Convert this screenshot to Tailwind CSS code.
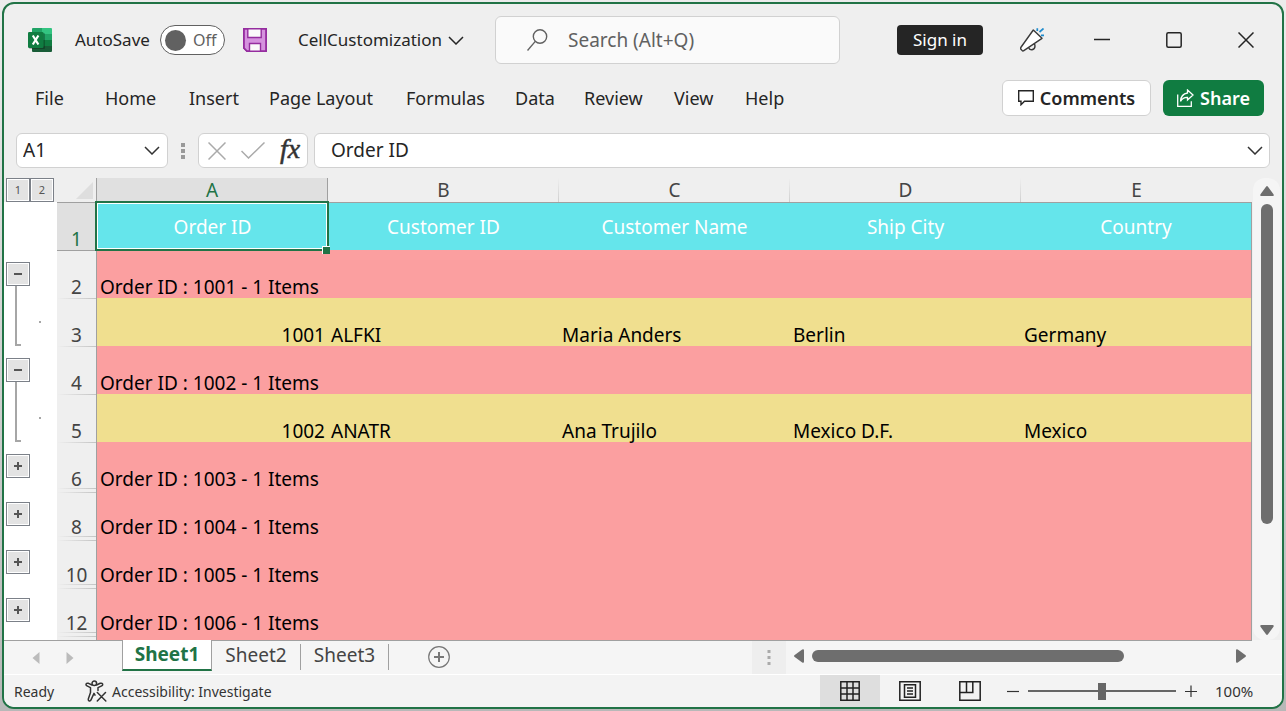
<!DOCTYPE html>
<html lang="en">
<head>
<meta charset="utf-8">
<title>CellCustomization - Excel</title>
<script src="https://cdn.jsdelivr.net/npm/@tailwindcss/browser@4"></script>
</head>
<body class="h-screen overflow-hidden bg-linear-to-b from-[#ececec] to-[#b8b8b8] p-[2px] font-['Noto_Sans','Open_Sans',sans-serif] text-[#252525]">
<div class="flex h-full flex-col overflow-hidden rounded-xl border-2 border-[#217346] bg-[#efefef]">

  <!-- Title bar -->
  <header class="flex h-[72px] shrink-0 items-center pl-6 pr-7">
    <svg class="size-6 shrink-0" viewBox="0 0 24 24" aria-label="Excel">
      <path d="M5 0h9v8H4V1q0-1 1-1z" fill="#21a366"/><path d="M14 0h9q1 0 1 1v7H14z" fill="#33c481"/>
      <path d="M4 8h10v5H4z" fill="#107c41"/><path d="M14 6h10v6H14z" fill="#21a366"/>
      <path d="M14 12h10v6H14z" fill="#107c41"/><path d="M4 12h10v6h10v5q0 1-1 1H5q-1 0-1-1z" fill="#185c37"/>
      <rect x="1" y="5" width="16" height="16" rx="1" fill="#000" opacity=".25"/>
      <rect y="4" width="15.500" height="16" rx="1.200" fill="#107c41"/>
      <path d="M4.800 7.500l5.600 9M10.400 7.500l-5.600 9" stroke="#fff" stroke-width="2.200"/>
    </svg>
    <span id="as" class="ml-[23px] w-[85px] shrink-0 text-[17px]">AutoSave</span>
    <button role="switch" aria-checked="false" aria-labelledby="as" class="flex h-[30px] w-[65px] shrink-0 items-center gap-[7px] rounded-full border border-[#616161] bg-white pl-1 text-[16px] text-[#616161]"><span class="size-[21px] rounded-full bg-[#616161]"></span>Off</button>
    <button aria-label="Save" class="ml-[18px] shrink-0">
      <svg class="size-6" viewBox="0 0 24 24"><path d="M.8.800h22.400v22.400H4L.8 20z" fill="#d592de" stroke="#952d9f" stroke-width="1.600"/><path d="M4.800 1v8.500h13.400V1M6.500 23v-7.500h11V23" fill="#fafafa" stroke="#952d9f" stroke-width="1.400"/><path d="M.8.800h22.400v22.400H4L.8 20z" fill="none" stroke="#952d9f" stroke-width="1.600"/></svg>
    </button>
    <button class="ml-[31px] flex shrink-0 items-center gap-1.5 text-[17px]">CellCustomization
      <svg class="h-[9px] w-4" viewBox="0 0 16 9" fill="none" stroke="#252525" stroke-width="1.500"><path d="M1 1l7 7 7-7"/></svg>
    </button>
    <label class="ml-[31px] flex h-12 w-[345px] items-center gap-5 rounded-md border border-[#d1d1d1] bg-[#fafafa] pl-[31px]">
      <svg class="h-[22px] w-[21px] shrink-0" viewBox="0 0 21 22" fill="none" stroke="#616161" stroke-width="1.400"><circle cx="13" cy="7.500" r="6.700"/><path d="M8.300 12.400L.5 21.500"/></svg>
      <input type="text" aria-label="Search" placeholder="Search (Alt+Q)" class="min-w-0 flex-1 bg-transparent text-[19px] outline-none placeholder:text-[#616161]">
    </label>
    <div class="ml-auto flex shrink-0 items-center">
      <button class="h-[30px] w-[86px] rounded-sm bg-[#252525] text-[17px] text-white">Sign in</button>
      <button aria-label="Coming soon" class="ml-[37px]"><svg class="h-6 w-6" viewBox="0 0 24 24" fill="none" stroke="#3a3a3a" stroke-width="1.400" stroke-linejoin="round"><path d="M8.500 19.500q1 2.500 3.500 2.300 3-.5 3-3.800 0-1.500-1-2.500" /><path d="M13.300 2L22 10.300 3.800 22.700q-1 .7-1.800-.3l-1-1.200q-.7-.8-.2-1.700z" fill="#fff"/><path d="M17.300.2v2.800M23.500.5l-4 3.500M21 7.300h3" stroke="#1e8bcd" stroke-width="1.700"/></svg></button>
      <button aria-label="Minimize" class="ml-[50px]"><svg class="size-4" viewBox="0 0 16 16"><path d="M0 7.500h16" stroke="#252525" stroke-width="1.300"/></svg></button>
      <button aria-label="Maximize" class="ml-14"><svg class="size-4" viewBox="0 0 16 16"><rect x=".8" y=".8" width="14.400" height="14.400" rx="1.500" fill="none" stroke="#252525" stroke-width="1.500"/></svg></button>
      <button aria-label="Close" class="ml-14"><svg class="size-4" viewBox="0 0 16 16"><path d="M.5.500l15 15M15.500.500l-15 15" stroke="#252525" stroke-width="1.500"/></svg></button>
    </div>
  </header>

  <!-- Ribbon tabs -->
  <nav class="flex h-[45px] shrink-0 items-start pt-1 pl-[31px] pr-[18px] text-[18px] leading-9">
    <button class="w-[70px] text-left">File</button>
    <button class="w-[84px] text-left">Home</button>
    <button class="w-20 text-left">Insert</button>
    <button class="w-[137px] text-left">Page Layout</button>
    <button class="w-[109px] text-left">Formulas</button>
    <button class="w-[69px] text-left">Data</button>
    <button class="w-[90px] text-left">Review</button>
    <button class="w-[71px] text-left">View</button>
    <button class="text-left">Help</button>
    <button class="ml-auto flex h-9 w-[149px] shrink-0 items-center justify-center gap-1.5 rounded-md border border-[#d1d1d1] bg-white text-[18px] font-semibold">
      <svg class="h-4 w-4" viewBox="0 0 16 16" fill="none" stroke="#252525" stroke-width="1.400"><path d="M.7.800h14.600v10.400H6.500L3 14.700v-3.500H.7z"/></svg>Comments</button>
    <button class="ml-3 flex h-9 w-[101px] shrink-0 items-center justify-center gap-1.5 rounded-md bg-[#107c41] text-[18px] font-semibold text-white">
      <svg class="h-[18px] w-[17px]" viewBox="0 0 17 18" fill="none" stroke="#fff" stroke-width="1.300"><path d="M.7 5.500v11.800h13.600v-5"/><path d="M10.500 1l5.500 5-5.500 5V8.300Q6 8 3.500 12.300 4 5 10.500 4z"/></svg>Share</button>
  </nav>

  <!-- Formula bar -->
  <div class="flex h-[57px] shrink-0 items-center px-3 pt-[2px]">
    <div class="flex h-[35px] w-[152px] shrink-0 items-center rounded-md border border-[#d1d1d1] bg-white pl-1.5 pr-[7px]">
      <input aria-label="Name box" value="A1" class="min-w-0 flex-1 bg-transparent text-[19px] outline-none">
      <button aria-label="Open name list"><svg class="h-[9px] w-4" viewBox="0 0 16 9" fill="none" stroke="#333" stroke-width="1.500"><path d="M1 1l7 7 7-7"/></svg></button>
    </div>
    <svg class="ml-3 h-4 w-[6px] shrink-0" viewBox="0 0 6 16" fill="#999"><path d="M1 0h4v4H1zM1 6h4v4H1zM1 12h4v4H1z"/></svg>
    <div class="ml-3 flex h-[35px] w-[110px] shrink-0 items-center gap-[15px] rounded-md border border-[#d1d1d1] bg-white pl-[9px]">
      <button aria-label="Cancel"><svg class="size-[18px]" viewBox="0 0 18 18"><path d="M.5.500l17 17M17.500.500l-17 17" stroke="#aaa" stroke-width="1.500"/></svg></button>
      <button aria-label="Enter"><svg class="h-[17px] w-6" viewBox="0 0 24 17"><path d="M.5 9l7 7L23.500.500" fill="none" stroke="#aaa" stroke-width="1.500"/></svg></button>
      <button aria-label="Insert function" class="pb-1 font-['Liberation_Serif',serif] text-[28px] leading-6 text-[#333] italic [-webkit-text-stroke:0.5px_#333]">fx</button>
    </div>
    <div class="ml-1.5 flex h-[35px] min-w-0 flex-1 items-center rounded-md border border-[#d1d1d1] bg-white pl-4 pr-1.5">
      <input aria-label="Formula" value="Order ID" class="min-w-0 flex-1 bg-transparent text-[19px] outline-none">
      <button aria-label="Expand formula bar"><svg class="h-[9px] w-4" viewBox="0 0 16 9" fill="none" stroke="#333" stroke-width="1.500"><path d="M1 1l7 7 7-7"/></svg></button>
    </div>
  </div>

  <!-- Worksheet -->
  <main class="flex min-h-0 flex-1 overflow-hidden">
    <aside class="flex w-[53px] shrink-0 flex-col bg-white text-[#444]">
      <div class="flex h-6 bg-[#efefef] pl-[2px]">
        <button class="size-6 border border-[#7b8088] bg-[#e3e3e3] text-[11px] text-[#555] shadow-[inset_0_0_0_1px_white]">1</button>
        <button class="size-6 border border-[#7b8088] bg-[#e3e3e3] text-[11px] text-[#555] shadow-[inset_0_0_0_1px_white]">2</button>
      </div>
      <div class="mt-[60px] flex h-24 flex-col pl-[2px]">
        <button aria-label="Collapse" class="flex size-6 items-center justify-center border border-[#7b8088] bg-[#e3e3e3] shadow-[inset_0_0_0_1px_white]"><span class="h-[2px] w-2 bg-[#555]"></span></button>
        <div class="ml-[9px] flex h-[60px] w-[26px] items-center justify-between"><span class="h-full w-1.5 border-b-2 border-l-2 border-[#a6a6a6]"></span><span class="mt-3 size-[2px] bg-[#a6a6a6]"></span></div>
      </div>
      <div class="flex h-24 flex-col pl-[2px]">
        <button aria-label="Collapse" class="flex size-6 items-center justify-center border border-[#7b8088] bg-[#e3e3e3] shadow-[inset_0_0_0_1px_white]"><span class="h-[2px] w-2 bg-[#555]"></span></button>
        <div class="ml-[9px] flex h-[60px] w-[26px] items-center justify-between"><span class="h-full w-1.5 border-b-2 border-l-2 border-[#a6a6a6]"></span><span class="mt-3 size-[2px] bg-[#a6a6a6]"></span></div>
      </div>
      <div class="flex flex-col gap-6 pl-[2px]">
        <button aria-label="Expand" class="flex size-6 items-center justify-center border border-[#7b8088] bg-[#e3e3e3] shadow-[inset_0_0_0_1px_white]"><svg class="size-2" viewBox="0 0 8 8"><path d="M0 4h8M4 0v8" stroke="#555" stroke-width="2"/></svg></button>
        <button aria-label="Expand" class="flex size-6 items-center justify-center border border-[#7b8088] bg-[#e3e3e3] shadow-[inset_0_0_0_1px_white]"><svg class="size-2" viewBox="0 0 8 8"><path d="M0 4h8M4 0v8" stroke="#555" stroke-width="2"/></svg></button>
        <button aria-label="Expand" class="flex size-6 items-center justify-center border border-[#7b8088] bg-[#e3e3e3] shadow-[inset_0_0_0_1px_white]"><svg class="size-2" viewBox="0 0 8 8"><path d="M0 4h8M4 0v8" stroke="#555" stroke-width="2"/></svg></button>
        <button aria-label="Expand" class="flex size-6 items-center justify-center border border-[#7b8088] bg-[#e3e3e3] shadow-[inset_0_0_0_1px_white]"><svg class="size-2" viewBox="0 0 8 8"><path d="M0 4h8M4 0v8" stroke="#555" stroke-width="2"/></svg></button>
      </div>
    </aside>

    <div class="min-w-0 flex-1 overflow-hidden">
    <table class="w-full table-fixed border-separate border-spacing-0 text-[19px] leading-[22px] whitespace-nowrap text-black [&_tbody_th]:w-10 [&_tbody_th]:border-r [&_tbody_th]:border-[#a0a0a0] [&_tbody_th]:bg-no-repeat [&_tbody_th]:p-0 [&_tbody_th]:text-center [&_tbody_th]:align-bottom [&_tbody_th]:font-normal [&_tbody_th]:text-[#444] [&_td]:px-[3px] [&_td]:py-0 [&_td:last-child]:border-r [&_td:last-child]:border-[#a0a0a0]">
      <colgroup><col class="w-10"><col><col><col><col><col></colgroup>
      <thead>
        <tr class="h-[25px] text-[#444] [&>th]:border-b [&>th]:border-[#a0a0a0] [&>th]:p-0 [&>th]:font-normal">
          <th class="border-r"><svg class="ml-auto mr-[3px] size-[17px]" viewBox="0 0 17 17"><path d="M17 0v17H0z" fill="#dedede"/></svg></th>
          <th scope="col" class="border-r bg-[#e0e0e0] text-[#217346]">A</th>
          <th scope="col" class="bg-linear-to-b from-[#efefef] to-[#cfcfcf] bg-[length:1px_100%] bg-right bg-no-repeat">B</th>
          <th scope="col" class="bg-linear-to-b from-[#efefef] to-[#cfcfcf] bg-[length:1px_100%] bg-right bg-no-repeat">C</th>
          <th scope="col" class="bg-linear-to-b from-[#efefef] to-[#cfcfcf] bg-[length:1px_100%] bg-right bg-no-repeat">D</th>
          <th scope="col">E</th>
        </tr>
      </thead>
      <tbody>
        <tr class="h-[47px] bg-[#65e5eb] text-center align-middle text-white">
          <th scope="row" class="bg-[#e0e0e0] text-[#217346]!">1</th>
          <td class="relative">Order ID<span class="pointer-events-none absolute -top-[2px] -right-[1px] -bottom-[1px] -left-[2px] border-2 border-[#217346] shadow-[inset_0_0_0_1px_white]"></span><span class="absolute -right-[2px] -bottom-[4px] size-[8px] border-t border-l border-white bg-[#217346]"></span></td>
          <td>Customer ID</td><td>Customer Name</td><td>Ship City</td><td>Country</td>
        </tr>
        <tr class="h-12 bg-[#fb9fa0] align-bottom"><th scope="row" class="bg-[#efefef] bg-linear-to-r from-[#a0a0a0] to-[#a0a0a0] bg-[length:100%_1px] bg-top">2</th><td colspan="5">Order ID : 1001 - 1 Items</td></tr>
        <tr class="h-12 bg-[#f0df8f] align-bottom"><th scope="row" class="bg-[#efefef] bg-linear-to-r from-[#efefef] to-[#c4c4c4] bg-[length:100%_1px] bg-top">3</th><td class="text-right">1001</td><td>ALFKI</td><td>Maria Anders</td><td>Berlin</td><td>Germany</td></tr>
        <tr class="h-12 bg-[#fb9fa0] align-bottom"><th scope="row" class="bg-[#efefef] bg-linear-to-r from-[#efefef] to-[#c4c4c4] bg-[length:100%_1px] bg-top">4</th><td colspan="5">Order ID : 1002 - 1 Items</td></tr>
        <tr class="h-12 bg-[#f0df8f] align-bottom"><th scope="row" class="bg-[#efefef] bg-linear-to-r from-[#efefef] to-[#c4c4c4] bg-[length:100%_1px] bg-top">5</th><td class="text-right">1002</td><td>ANATR</td><td>Ana Trujilo</td><td>Mexico D.F.</td><td>Mexico</td></tr>
        <tr class="h-12 bg-[#fb9fa0] align-bottom"><th scope="row" class="bg-[#efefef] [background-image:linear-gradient(90deg,#efefef,#c4c4c4),linear-gradient(90deg,#efefef,#c4c4c4)] bg-[length:100%_1px] bg-[position:0_0,0_46px]">6</th><td colspan="5">Order ID : 1003 - 1 Items</td></tr>
        <tr class="h-12 bg-[#fb9fa0] align-bottom"><th scope="row" class="bg-[#efefef] [background-image:linear-gradient(90deg,#efefef,#c4c4c4),linear-gradient(90deg,#efefef,#c4c4c4)] bg-[length:100%_1px] bg-[position:0_2px,0_46px]">8</th><td colspan="5">Order ID : 1004 - 1 Items</td></tr>
        <tr class="h-12 bg-[#fb9fa0] align-bottom"><th scope="row" class="bg-[#efefef] [background-image:linear-gradient(90deg,#efefef,#c4c4c4),linear-gradient(90deg,#efefef,#c4c4c4)] bg-[length:100%_1px] bg-[position:0_2px,0_46px]">10</th><td colspan="5">Order ID : 1005 - 1 Items</td></tr>
        <tr class="h-12 bg-[#fb9fa0] align-bottom"><th scope="row" class="bg-[#efefef] [background-image:linear-gradient(90deg,#efefef,#c4c4c4),linear-gradient(90deg,#efefef,#c4c4c4)] bg-[length:100%_1px] bg-[position:0_2px,0_46px]">12</th><td colspan="5">Order ID : 1006 - 1 Items</td></tr>
        <tr class="h-12 bg-[#fb9fa0]"><th scope="row" class="bg-[#efefef] bg-linear-to-r from-[#efefef] to-[#c4c4c4] bg-[length:100%_1px] bg-[position:0_2px]"></th><td colspan="5"></td></tr>
      </tbody>
    </table>
    </div>

    <div class="mr-[2px] ml-px flex w-[27px] shrink-0 flex-col items-center rounded-xl bg-[#f5f5f5] pt-2 pb-[5px]">
      <svg class="h-[10px] w-[14px]" viewBox="0 0 14 10"><path d="M6 .7q1-1.400 2 0l5.500 7.500q.8 1.800-1 1.800h-11q-1.800 0-1-1.800z" fill="#6e6e6e"/></svg>
      <div class="mt-2 min-h-0 w-3 flex-1"><div class="h-[76%] w-3 rounded-full bg-[#6e6e6e]"></div></div>
      <svg class="h-[10px] w-[14px]" viewBox="0 0 14 10"><path d="M6 9.300q1 1.400 2 0l5.500-7.500q.8-1.800-1-1.800h-11q-1.800 0-1 1.800z" fill="#6e6e6e"/></svg>
    </div>
  </main>

  <!-- Sheet tabs and horizontal scroll bar -->
  <div class="flex h-[34px] shrink-0 bg-[#f5f5f5] text-[19px] text-[#444]">
    <div class="flex w-[118px] shrink-0 items-center gap-[26px] border-t border-[#a0a0a0] pl-7">
      <button aria-label="Previous sheet"><svg class="h-3 w-2" viewBox="0 0 8 12"><path d="M7.500 0v12L.5 6z" fill="#bbb"/></svg></button>
      <button aria-label="Next sheet"><svg class="h-3 w-2" viewBox="0 0 8 12"><path d="M.5 0v12l7-6z" fill="#bbb"/></svg></button>
    </div>
    <button class="h-[31px] w-[90px] shrink-0 border-x border-b-2 border-x-[#a0a0a0] border-b-[#217346] bg-white font-bold text-[#217346]">Sheet1</button>
    <div class="flex min-w-0 flex-1 items-start border-t border-[#a0a0a0]">
      <button class="mt-[3px] h-[26px] w-[89px] shrink-0 border-r border-[#a0a0a0] pb-1 leading-[22px]">Sheet2</button>
      <button class="mt-[3px] h-[26px] w-[88px] shrink-0 border-r border-[#a0a0a0] pb-1 leading-[22px]">Sheet3</button>
      <button aria-label="New sheet" class="mt-[5px] ml-[39px] shrink-0"><svg class="size-[22px]" viewBox="0 0 22 22" fill="none" stroke="#777"><circle cx="11" cy="11" r="10.300" stroke-width="1.200"/><path d="M6 11h10M11 6v10" stroke-width="2"/></svg></button>
      <div class="ml-auto flex h-full w-[34px] shrink-0 items-center justify-center bg-[#eee]"><svg class="h-4 w-[4px]" viewBox="0 0 4 16" fill="#aaa"><path d="M.5 0h3v3h-3zM.5 6h3v3h-3zM.5 12h3v3h-3z"/></svg></div>
      <div class="flex h-[30px] w-[466px] shrink-0 items-center bg-[#f5f5f5] pl-2 pr-[6px]">
        <svg class="h-[14px] w-[10px]" viewBox="0 0 10 14"><path d="M.7 6q-1.400 1 0 2l7.500 5.500q1.800.8 1.800-1v-11q0-1.800-1.800-1z" fill="#6e6e6e"/></svg>
        <div class="mx-2 flex-1"><div class="h-3 w-[312px] rounded-full bg-[#6e6e6e]"></div></div>
        <svg class="h-[14px] w-[10px]" viewBox="0 0 10 14"><path d="M9.300 6q1.400 1 0 2l-7.500 5.500q-1.800.8-1.800-1v-11q0-1.800 1.800-1z" fill="#6e6e6e"/></svg>
      </div>
    </div>
    <div class="w-[30px] shrink-0"></div>
  </div>

  <!-- Status bar -->
  <footer class="flex h-[33px] shrink-0 items-center border-t border-white bg-[#f3f3f3] pl-[10px] pr-[26px] text-[14px] text-[#333]">
    <span class="w-[71px]">Ready</span>
    <button class="flex items-center gap-[5px]">
      <svg class="h-[22px] w-[22px]" viewBox="0 0 22 22" fill="none" stroke="#333" stroke-width="1.500" stroke-linecap="round" stroke-linejoin="round"><circle cx="9.300" cy="3.300" r="2.300"/><path d="M7 5L3.500 3.300Q1 2.800 1 4.600q0 .8 1 1.300l3.500 1.800v4.800L3.300 19q-.2 1.600 1 1.900 1.200.2 1.700-1l3-6.500 1 1.800M11.600 5l3.600-1.700q2.500-.5 2.500 1.300 0 .8-1 1.300L13 7.700v2.800M12.300 12.500l8.500 8.500M20.500 12.500L12.300 21"/></svg>
      Accessibility: Investigate</button>
    <div class="ml-auto flex h-full shrink-0 items-center">
      <button aria-label="Normal view" class="flex h-full w-[60px] items-center justify-center bg-[#dedede]"><svg class="size-5" viewBox="0 0 20 20" fill="none" stroke="#222" stroke-width="1.500"><path d="M.8.800h18.400v18.400H.8zM.8 7h18.400M.8 13h18.400M7 .8v18.400M13 .8v18.400"/></svg></button>
      <button aria-label="Page layout view" class="flex h-full w-[60px] items-center justify-center"><svg class="h-5 w-[22px]" viewBox="0 0 22 20" fill="none" stroke="#222" stroke-width="1.500"><path d="M.8.800h20.400v18.400H.8zM5.500 3.800h11v12.400h-11zM8 7h6M8 10h6M8 13h6"/></svg></button>
      <button aria-label="Page break preview" class="flex h-full w-[60px] items-center justify-center"><svg class="h-5 w-[22px]" viewBox="0 0 22 20" fill="none" stroke="#222" stroke-width="1.500"><path d="M.8.800h20.400v18.400H.8zM.8 11.500h13V.8M7.500.800v10.700"/></svg></button>
      <button aria-label="Zoom out" class="ml-[7px]"><svg class="size-3" viewBox="0 0 12 12"><path d="M0 6.500h12" stroke="#333" stroke-width="1.200"/></svg></button>
      <input type="range" aria-label="Zoom" min="0" max="100" value="50" class="mx-[9px] h-[18px] w-[148px] appearance-none bg-linear-to-b from-[#666] to-[#666] bg-[length:100%_2px] bg-center bg-no-repeat [&::-webkit-slider-thumb]:h-[17px] [&::-webkit-slider-thumb]:w-2 [&::-webkit-slider-thumb]:appearance-none [&::-webkit-slider-thumb]:bg-[#666]">
      <button aria-label="Zoom in"><svg class="size-3" viewBox="0 0 12 12"><path d="M0 6.500h12M6 .5v12" stroke="#333" stroke-width="1.200"/></svg></button>
      <button class="ml-[18px] w-[41px] text-left text-[15px]">100%</button>
    </div>
  </footer>
</div>
</body>
</html>
